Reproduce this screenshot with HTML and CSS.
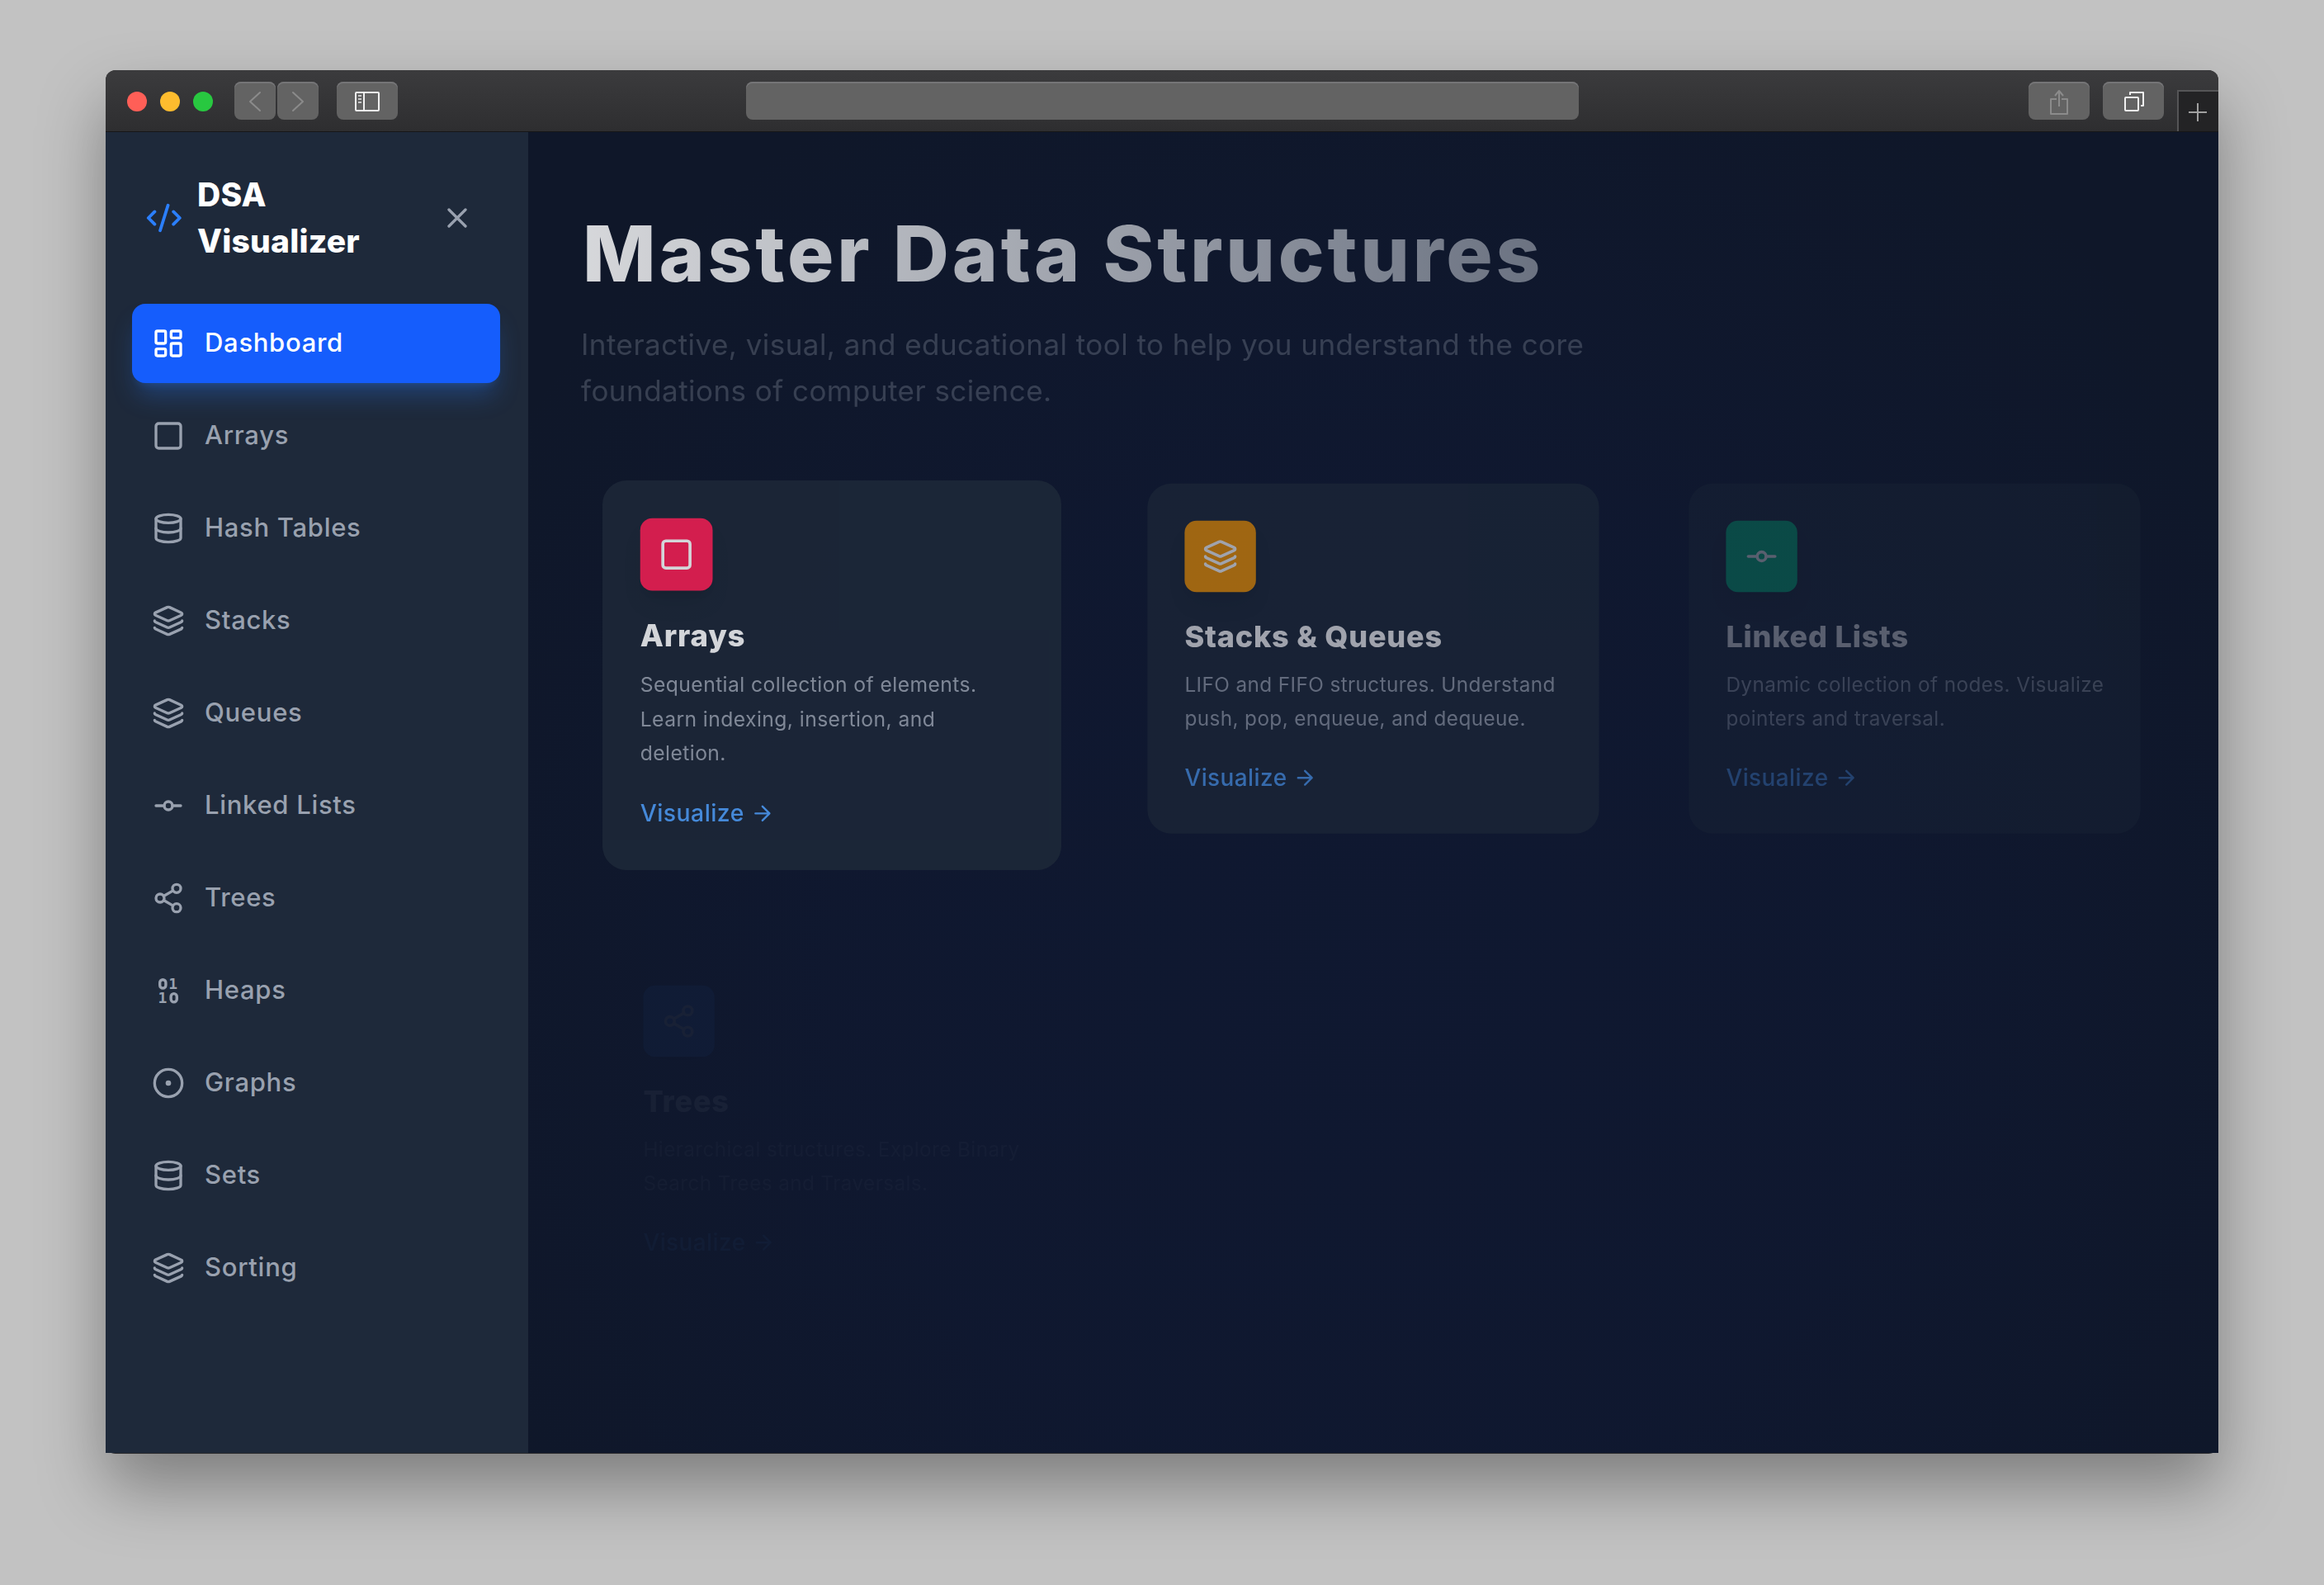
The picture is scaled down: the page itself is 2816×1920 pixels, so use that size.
FILE: index.html
```
<!DOCTYPE html>
<html lang="en">
<head>
    <meta charset="UTF-8">
    <meta name="viewport" content="width=device-width, initial-scale=1.0">
    <title>DSA Visualizer</title>
    <link rel="stylesheet" href="styles.css">
</head>
<body>

    <svg class="sprite">
        <symbol id="dashboard" viewBox="0 0 24 24">
            <rect x="3" y="3" width="7" height="9" rx="1"/>
            <rect x="14" y="3" width="7" height="5" rx="1"/>
            <rect x="14" y="12" width="7" height="9" rx="1"/>
            <rect x="3" y="16" width="7" height="5" rx="1"/>
        </symbol>
        <symbol id="square" viewBox="0 0 24 24">
            <rect x="3" y="3" width="18" height="18" rx="2"/>
        </symbol>
        <symbol id="database" viewBox="0 0 24 24">
            <ellipse cx="12" cy="5" rx="9" ry="3"/>
            <path d="M3 5v14a9 3 0 0 0 18 0V5"/>
            <path d="M3 12a9 3 0 0 0 18 0"/>
        </symbol>
        <symbol id="layers" viewBox="0 0 24 24">
            <path d="M12.83 2.18a2 2 0 0 0-1.66 0L2.6 6.08a1 1 0 0 0 0 1.83l8.58 3.91a2 2 0 0 0 1.66 0l8.58-3.9a1 1 0 0 0 0-1.83z"/>
            <path d="M2 12a1 1 0 0 0 .58.91l8.6 3.91a2 2 0 0 0 1.65 0l8.58-3.9A1 1 0 0 0 22 12"/>
            <path d="M2 17a1 1 0 0 0 .58.91l8.6 3.91a2 2 0 0 0 1.65 0l8.58-3.9A1 1 0 0 0 22 17"/>
        </symbol>
        <symbol id="commit" viewBox="0 0 24 24">
            <circle cx="12" cy="12" r="3"/>
            <path d="M3 12h6M15 12h6"/>
        </symbol>
        <symbol id="share" viewBox="0 0 24 24">
            <circle cx="18" cy="5" r="3"/>
            <circle cx="6" cy="12" r="3"/>
            <circle cx="18" cy="19" r="3"/>
            <path d="M8.59 13.51l6.83 3.98M15.41 6.51l-6.82 3.98"/>
        </symbol>
        <symbol id="dot" viewBox="0 0 24 24">
            <circle cx="12" cy="12" r="10"/>
            <circle cx="12" cy="12" r="1"/>
        </symbol>
        <symbol id="arrow" viewBox="0 0 24 24">
            <path d="M5 12h14M12 5l7 7-7 7"/>
        </symbol>
    </svg>

    <div class="window">
        <div class="titlebar">
            <div class="lights">
                <span class="light red"></span>
                <span class="light yellow"></span>
                <span class="light green"></span>
            </div>
            <div class="nav-buttons">
                <span class="tool small"><svg width="50" height="46" viewBox="0 0 50 46"><path d="M31 13L19 24l12 11"/></svg></span>
                <span class="tool small"><svg width="50" height="46" viewBox="0 0 50 46"><path d="M19 13l12 11-12 11"/></svg></span>
            </div>
            <span class="tool light-icon">
                <svg width="74" height="46" viewBox="0 0 74 46">
                    <rect x="23" y="13" width="28" height="22" rx="1"/>
                    <path d="M33 13v22"/>
                    <path class="thin" d="M26 17h4M26 21h4M26 25h4"/>
                </svg>
            </span>
            <div class="address"></div>
            <span class="tool">
                <svg width="74" height="46" viewBox="0 0 74 46">
                    <path d="M34 21h-7v18h20V21h-7M37 30V12M32 17l5-6 5 6"/>
                </svg>
            </span>
            <span class="tool light-icon">
                <svg width="74" height="46" viewBox="0 0 74 46">
                    <rect x="27" y="19" width="16" height="16" rx="1"/>
                    <path d="M33 16v-3h16v16h-3"/>
                </svg>
            </span>
            <span class="new-tab"><svg width="22" height="22" viewBox="0 0 22 22"><path d="M11 0v22M0 11h22"/></svg></span>
        </div>

        <div class="app">
            <aside class="sidebar">
                <div class="brand">
                    <svg class="brand-icon" viewBox="0 0 24 24"><path d="M18 16l4-4-4-4M6 8l-4 4 4 4M14.5 4l-5 16"/></svg>
                    <h2>DSA<br>Visualizer</h2>
                    <button type="button" class="close"><svg class="icon" viewBox="0 0 24 24"><path d="M18 6L6 18M6 6l12 12"/></svg></button>
                </div>
                <nav>
                    <a class="item active"><svg class="icon"><use href="#dashboard"/></svg><span>Dashboard</span></a>
                    <a class="item"><svg class="icon"><use href="#square"/></svg><span>Arrays</span></a>
                    <a class="item"><svg class="icon"><use href="#database"/></svg><span>Hash Tables</span></a>
                    <a class="item"><svg class="icon"><use href="#layers"/></svg><span>Stacks</span></a>
                    <a class="item"><svg class="icon"><use href="#layers"/></svg><span>Queues</span></a>
                    <a class="item"><svg class="icon"><use href="#commit"/></svg><span>Linked Lists</span></a>
                    <a class="item"><svg class="icon"><use href="#share"/></svg><span>Trees</span></a>
                    <a class="item">
                        <svg class="icon binary" viewBox="0 0 40 40">
                            <rect x="9.7" y="6.7" width="7.2" height="10.3" rx="3.6"/>
                            <text x="20.2" y="18.4">1</text>
                            <text x="7.6" y="35.2">1</text>
                            <rect x="23.1" y="23.6" width="7.2" height="10.3" rx="3.6"/>
                        </svg>
                        <span>Heaps</span>
                    </a>
                    <a class="item"><svg class="icon"><use href="#dot"/></svg><span>Graphs</span></a>
                    <a class="item"><svg class="icon"><use href="#database"/></svg><span>Sets</span></a>
                    <a class="item"><svg class="icon"><use href="#layers"/></svg><span>Sorting</span></a>
                </nav>
            </aside>

            <main>
                <header class="hero">
                    <h1>Master Data Structures</h1>
                    <p>Interactive, visual, and educational tool to help you understand the core foundations of computer science.</p>
                </header>

                <div class="grid">
                    <div class="slot first">
                        <div class="card">
                            <div class="tile rose"><svg><use href="#square"/></svg></div>
                            <h3>Arrays</h3>
                            <p>Sequential collection of elements.<br>Learn indexing, insertion, and<br>deletion.</p>
                            <a class="more">Visualize <svg><use href="#arrow"/></svg></a>
                        </div>
                    </div>
                    <div class="slot second">
                        <div class="card">
                            <div class="tile amber"><svg><use href="#layers"/></svg></div>
                            <h3>Stacks &amp; Queues</h3>
                            <p>LIFO and FIFO structures. Understand<br>push, pop, enqueue, and dequeue.</p>
                            <a class="more">Visualize <svg><use href="#arrow"/></svg></a>
                        </div>
                    </div>
                    <div class="slot third">
                        <div class="card">
                            <div class="tile emerald"><svg><use href="#commit"/></svg></div>
                            <h3>Linked Lists</h3>
                            <p>Dynamic collection of nodes. Visualize<br>pointers and traversal.</p>
                            <a class="more">Visualize <svg><use href="#arrow"/></svg></a>
                        </div>
                    </div>
                    <div class="slot fourth">
                        <div class="card">
                            <div class="tile blue"><svg><use href="#share"/></svg></div>
                            <h3>Trees</h3>
                            <p>Hierarchical structures. Explore Binary<br>Search Trees and Traversals.</p>
                            <a class="more">Visualize <svg><use href="#arrow"/></svg></a>
                        </div>
                    </div>
                </div>
            </main>
        </div>
    </div>

</body>
</html>
```
FILE: styles.css
```
* {
    box-sizing: border-box;
    margin: 0;
    padding: 0;
}

body {
    width: 2816px;
    height: 1920px;
    padding: 85px 128px 0;
    overflow: hidden;
    background-color: #c2c2c2;
    font-family: Inter, "Liberation Sans", sans-serif;
}

svg {
    display: block;
    flex: none;
    fill: none;
    stroke: currentColor;
    stroke-width: 2;
    stroke-linecap: round;
    stroke-linejoin: round;
}

.sprite {
    display: none;
}

/* browser window */
.window {
    height: 1676px;
    background-color: #2b2b2d;
    border-radius: 12px;
    box-shadow: 0 40px 80px rgba(0, 0, 0, 0.35);
}

.titlebar {
    display: flex;
    height: 75px;
    padding: 14px 0 0 26px;
    background: linear-gradient(#3b3b3d, #2e2e30);
    border-bottom: 1px solid #161617;
    border-radius: 12px 12px 0 0;
    overflow: hidden;
}

.lights {
    display: flex;
    gap: 16px;
    margin: 12px 26px 0 0;
}

.light {
    width: 24px;
    height: 24px;
    border-radius: 50%;
}

.red { background-color: #ff5f57; }
.yellow { background-color: #febc2e; }
.green { background-color: #28c840; }

.nav-buttons {
    display: flex;
    gap: 2px;
    margin-right: 22px;
}

.tool {
    width: 74px;
    height: 46px;
    background-color: #636363;
    border-radius: 8px;
    box-shadow: inset 0 2px 0 #757577;
    color: #8b8b8b;
    margin-right: 16px;
}

.tool.small {
    width: 50px;
    margin-right: 0;
}

.tool svg {
    stroke-linecap: butt;
}

.tool.small svg {
    stroke-linecap: round;
}

.light-icon {
    color: #f0f0f0;
}

.light-icon .thin {
    stroke: #c8c8c8;
}

.address {
    width: 1009px;
    height: 46px;
    margin: 0 545px 0 406px;
    background-color: #636363;
    border-radius: 8px;
    box-shadow: inset 0 2px 0 #757577;
}

.new-tab {
    width: 50px;
    height: 50px;
    margin-top: 10px;
    padding: 14px 12px;
    background-color: #232325;
    border-top: 2px solid #555557;
    border-left: 2px solid #555557;
    color: #a0a0a0;
}

.new-tab svg {
    stroke-linecap: butt;
}

/* app */
.app {
    display: flex;
    height: 1600px;
    letter-spacing: 0.5px;
}

.sidebar {
    width: 512px;
    background-color: #1e293a;
    color: #99a1af;
}

.brand {
    display: flex;
    align-items: center;
    padding: 48px 50px 48px 48px;
}

.brand-icon {
    width: 45.6px;
    height: 48px;
    color: #2b7fff;
}

.brand h2 {
    flex: 1;
    margin-left: 17.5px;
    font-size: 39px;
    font-weight: 800;
    line-height: 56px;
    letter-spacing: 0.2px;
    color: #fff;
}

.close {
    padding: 16px;
    background: none;
    border: none;
    color: inherit;
}

.icon {
    width: 40px;
    height: 40px;
}

nav {
    display: flex;
    flex-direction: column;
    gap: 16px;
    padding: 0 34px 0 32px;
}

.item {
    display: flex;
    align-items: center;
    gap: 24px;
    height: 96px;
    padding: 0 24px;
    border-radius: 16px;
    font-size: 31px;
    font-weight: 500;
    letter-spacing: 0.7px;
}

.item span {
    padding-bottom: 4px;
}

.item.active {
    background-color: #155dfc;
    color: #fff;
    box-shadow: 0 20px 30px -6px rgba(43, 127, 255, 0.3), 0 8px 12px -8px rgba(43, 127, 255, 0.3);
}

.binary {
    stroke-width: 3.4;
}

.binary text {
    font: bold 18px "DejaVu Sans Mono", monospace;
    fill: currentColor;
    stroke: none;
}

main {
    flex: 1;
    padding: 99px 64px 0;
    background: radial-gradient(circle 1250px at 50% 64%, rgba(18, 36, 136, 0.08), rgba(18, 36, 136, 0.065) 50%, transparent) #0f1729;
}

.hero {
    width: 1344px;
    margin-bottom: 58.7px;
}

.hero h1 {
    margin-bottom: 34.3px;
    padding-left: 2px;
    font-size: 94px;
    font-weight: 850;
    line-height: 96px;
    letter-spacing: 3.8px;
    white-space: nowrap;
    background: linear-gradient(to right, #fff, #6a7282);
    -webkit-background-clip: text;
    background-clip: text;
    color: transparent;
    opacity: 0.83;
}

.hero p {
    font-size: 35px;
    line-height: 56px;
    letter-spacing: 0.46px;
    color: #99a1af;
    opacity: 0.29;
}

.grid {
    display: grid;
    grid-template-columns: repeat(3, 608px);
    grid-auto-rows: 516px;
    gap: 47px 48px;
}

.first { opacity: 0.82; transform: scale(0.9145); }
.second { opacity: 0.605; transform: scale(0.9); }
.third { opacity: 0.305; transform: scale(0.9); }
.fourth { opacity: 0.035; transform: scale(0.9); }

.card {
    padding: 50px 50px 51px;
    background-color: #1e2939;
    border-radius: 32px;
}

.fourth .card {
    background-color: transparent;
}

.tile {
    width: 96px;
    height: 96px;
    padding: 24px;
    margin-bottom: 32px;
    border-radius: 16px;
    color: #fff;
    box-shadow: 0 20px 30px -6px rgba(0, 0, 0, 0.1), 0 8px 12px -8px rgba(0, 0, 0, 0.1);
}

.tile svg {
    width: 48px;
    height: 48px;
}

.rose { background-color: #ff2056; }
.amber { background-color: #fe9a00; }
.emerald { background-color: #00bc7d; }
.blue { background-color: #2b7fff; }

.card h3 {
    margin-bottom: 14px;
    font-size: 40px;
    font-weight: 800;
    line-height: 56px;
    letter-spacing: 0.9px;
    color: #fff;
}

.card p {
    margin-bottom: 32.5px;
    font-size: 27px;
    line-height: 45.5px;
    letter-spacing: 0.45px;
    white-space: nowrap;
    color: #99a1af;
}

.more {
    display: flex;
    align-items: center;
    gap: 8px;
    font-size: 31px;
    font-weight: 500;
    line-height: 48px;
    color: #51a2ff;
}

.more svg {
    width: 32px;
    height: 32px;
}
```
